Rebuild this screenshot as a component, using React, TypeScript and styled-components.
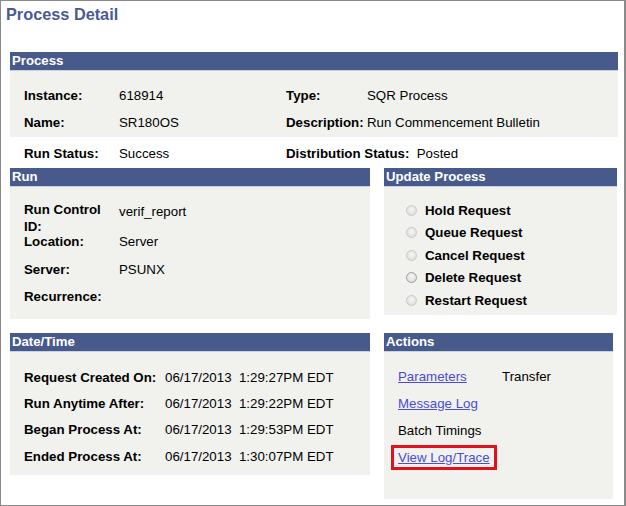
import * as React from "react";
import styled, { createGlobalStyle } from "styled-components";

const GlobalStyle = createGlobalStyle`
  html, body {
    margin: 0;
    padding: 0;
    background: #ffffff;
  }
  body {
    font-family: "Liberation Sans", Arial, sans-serif;
    font-size: 13.3px;
    color: #000000;
  }
`;

const Frame = styled.div`
  box-sizing: border-box;
  width: 626px;
  height: 506px;
  border: 1px solid #8a8a8a;
  border-right-width: 2px;
  padding: 0 0 0 9px;
`;

const Title = styled.h1`
  margin: 0 0 0 -4px;
  padding-top: 4px;
  height: 51px;
  box-sizing: border-box;
  font-size: 16.3px;
  font-weight: bold;
  color: #4a5a96;
  line-height: 19px;
`;

const Header = styled.div`
  height: 19px;
  box-sizing: border-box;
  background: #485a8c;
  border-bottom: 1px solid #c9d2e3;
  color: #ffffff;
  font-weight: bold;
  font-size: 13.2px;
  line-height: 18px;
  padding-left: 2px;
`;

const Body = styled.div<{ $h: number; $pt: number; $pl?: number }>`
  box-sizing: border-box;
  background: #f1f2ee;
  height: ${(p) => p.$h}px;
  padding-top: ${(p) => p.$pt}px;
  padding-left: ${(p) => p.$pl ?? 14}px;
`;

const ProcessBlock = styled.div`
  width: 608px;
`;

const ProcessRow = styled.div<{ $h?: number }>`
  display: grid;
  grid-template-columns: 95px 167px 81px 1fr;
  align-items: center;
  height: ${(p) => p.$h ?? 27}px;
`;

const StatusRow = styled(ProcessRow)`
  padding-left: 14px;
  margin-top: 3px;
  margin-bottom: 1px;
`;

const Label = styled.span`
  font-weight: bold;
`;

const Plain = styled.span`
  font-weight: normal;
`;

const Columns = styled.div`
  display: flex;
  gap: 14px;
`;

const LeftCol = styled.div`
  width: 360px;
`;

const RightCol = styled.div<{ $w: number }>`
  width: ${(p) => p.$w}px;
`;

const Field = styled.div<{ $h: number; $mt?: number; $lw?: number; $top?: boolean }>`
  display: grid;
  grid-template-columns: ${(p) => p.$lw ?? 95}px 1fr;
  align-items: ${(p) => (p.$top ? "start" : "center")};
  height: ${(p) => p.$h}px;
  margin-top: ${(p) => p.$mt ?? 0}px;
  line-height: 17px;
`;

const WrapLabel = styled(Label)`
  width: 80px;
`;

const TopValue = styled.span`
  padding-top: 2px;
`;

const RadioRow = styled.label`
  display: flex;
  align-items: center;
  gap: 8px;
  height: 22.5px;
  font-weight: bold;
`;

const Radio = styled.span<{ $dark?: boolean }>`
  box-sizing: border-box;
  width: 11px;
  height: 11px;
  border-radius: 50%;
  border: 1px solid ${(p) => (p.$dark ? "#9d9d9d" : "#c8c8c8")};
  background: radial-gradient(circle at 50% 40%, #f6f6f6 0%, #d8d8d8 100%);
`;

const Spacer = styled.div`
  height: 14px;
`;

const ActionRow = styled.div`
  display: grid;
  grid-template-columns: 104px 1fr;
  align-items: center;
  height: 27px;
`;

const Link = styled.a`
  color: #4b4bd6;
  text-decoration: underline;
  cursor: pointer;
`;

const Highlight = styled.span`
  display: inline-block;
  border: 3px solid #e3101d;
  padding: 2px 4px;
  margin-left: -7px;
  line-height: 15px;
  justify-self: start;
`;

export default function App() {
  return (
    <Frame>
      <GlobalStyle />
      <Title>Process Detail</Title>

      <ProcessBlock>
        <Header>Process</Header>
        <Body $h={66} $pt={10.5}>
          <ProcessRow>
            <Label>Instance:</Label>
            <span>618914</span>
            <Label>Type:</Label>
            <span>SQR Process</span>
          </ProcessRow>
          <ProcessRow>
            <Label>Name:</Label>
            <span>SR180OS</span>
            <Label>Description:</Label>
            <span>Run Commencement Bulletin</span>
          </ProcessRow>
        </Body>
        <StatusRow>
          <Label>Run Status:</Label>
          <span>Success</span>
          <Label style={{ gridColumn: "3 / 5" }}>
            Distribution Status:&nbsp;&nbsp;<Plain>Posted</Plain>
          </Label>
        </StatusRow>
      </ProcessBlock>

      <Columns>
        <LeftCol>
          <Header>Run</Header>
          <Body $h={132} $pt={14}>
            <Field $h={32} $top>
              <WrapLabel>Run Control ID:</WrapLabel>
              <TopValue>verif_report</TopValue>
            </Field>
            <Field $h={16}>
              <Label>Location:</Label>
              <span>Server</span>
            </Field>
            <Field $h={28} $mt={6}>
              <Label>Server:</Label>
              <span>PSUNX</span>
            </Field>
            <Field $h={27}>
              <Label>Recurrence:</Label>
              <span />
            </Field>
          </Body>
        </LeftCol>
        <RightCol $w={233}>
          <Header>Update Process</Header>
          <Body $h={128} $pt={12} $pl={22}>
            <RadioRow>
              <Radio />
              Hold Request
            </RadioRow>
            <RadioRow>
              <Radio />
              Queue Request
            </RadioRow>
            <RadioRow>
              <Radio />
              Cancel Request
            </RadioRow>
            <RadioRow>
              <Radio $dark />
              Delete Request
            </RadioRow>
            <RadioRow>
              <Radio />
              Restart Request
            </RadioRow>
          </Body>
        </RightCol>
      </Columns>

      <Spacer />

      <Columns>
        <LeftCol>
          <Header>Date/Time</Header>
          <Body $h={123} $pt={12}>
            <Field $h={26.3} $lw={141}>
              <Label>Request Created On:</Label>
              <span>06/17/2013&nbsp; 1:29:27PM EDT</span>
            </Field>
            <Field $h={26.3} $lw={141}>
              <Label>Run Anytime After:</Label>
              <span>06/17/2013&nbsp; 1:29:22PM EDT</span>
            </Field>
            <Field $h={26.3} $lw={141}>
              <Label>Began Process At:</Label>
              <span>06/17/2013&nbsp; 1:29:53PM EDT</span>
            </Field>
            <Field $h={26.3} $lw={141}>
              <Label>Ended Process At:</Label>
              <span>06/17/2013&nbsp; 1:30:07PM EDT</span>
            </Field>
          </Body>
        </LeftCol>
        <RightCol $w={229}>
          <Header>Actions</Header>
          <Body $h={147} $pt={10.5}>
            <ActionRow>
              <Link>Parameters</Link>
              <span>Transfer</span>
            </ActionRow>
            <ActionRow>
              <Link>Message Log</Link>
            </ActionRow>
            <ActionRow>
              <span>Batch Timings</span>
            </ActionRow>
            <ActionRow>
              <Highlight>
                <Link>View Log/Trace</Link>
              </Highlight>
            </ActionRow>
          </Body>
        </RightCol>
      </Columns>
    </Frame>
  );
}
